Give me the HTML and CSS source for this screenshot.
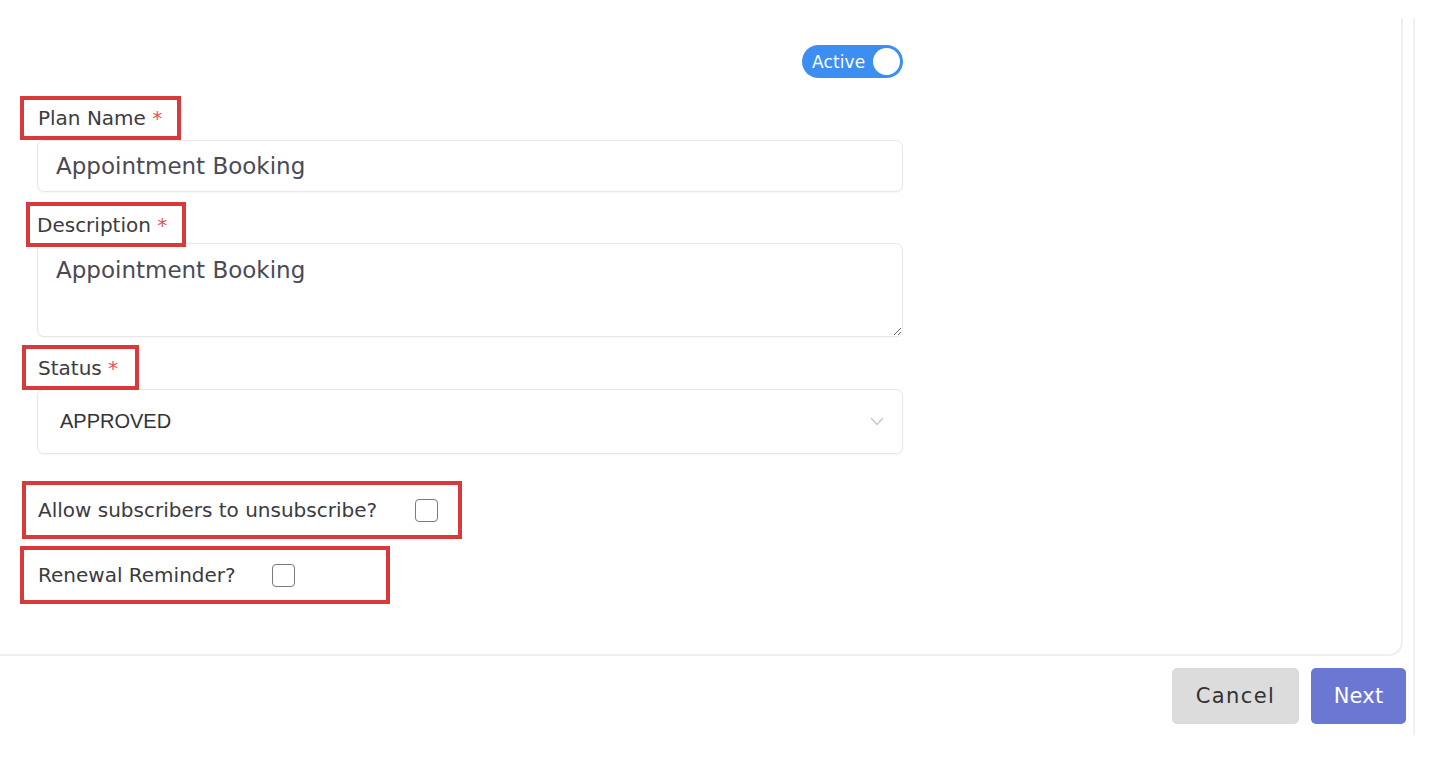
FILE: index.html
```html
<!DOCTYPE html>
<html lang="en">
<head>
<meta charset="utf-8">
<title>Plan</title>
<link rel="stylesheet" href="styles.css">
</head>
<body>
<div class="frame">
  <div class="card">
    <form class="form">
      <div class="toggle-row">
        <div class="toggle">
          <span class="toggle-text">Active</span>
          <span class="toggle-knob"></span>
        </div>
      </div>

      <label class="field-label label-plan">Plan Name <span class="req">*</span></label>
      <div class="input">Appointment Booking</div>

      <label class="field-label label-desc">Description <span class="req">*</span></label>
      <textarea class="textarea">Appointment Booking</textarea>

      <label class="field-label label-status">Status <span class="req">*</span></label>
      <div class="select">
        <span class="select-value">APPROVED</span>
        <svg class="chevron" width="14" height="9" viewBox="0 0 14 9"><path d="M1 1 L7 7.5 L13 1" fill="none" stroke="#c4c4c8" stroke-width="1.2"/></svg>
      </div>

      <div class="check-box check-unsub">
        <span class="check-text">Allow subscribers to unsubscribe?</span>
        <input type="checkbox" class="check">
      </div>
      <div class="check-box check-renew">
        <span class="check-text">Renewal Reminder?</span>
        <input type="checkbox" class="check">
      </div>
    </form>
  </div>
  <div class="footer">
    <button class="btn btn-cancel" type="button">Cancel</button>
    <button class="btn btn-next" type="button">Next</button>
  </div>
</div>
</body>
</html>
```

FILE: styles.css
```css
* { box-sizing: border-box; }
html, body { margin: 0; padding: 0; background: #fff; }
body {
  font-family: "DejaVu Sans", "Noto Sans", sans-serif;
  color: #3a3a3e;
  width: 1434px;
  height: 758px;
  overflow: hidden;
}
.frame {
  margin-top: 18px;
  width: 1415px;
  height: 717px;
  border-right: 2px solid #f1f1f4;
}
.card {
  width: 1403px;
  height: 638px;
  border-right: 2px solid #efeff2;
  border-bottom: 2px solid #efeff2;
  border-bottom-right-radius: 14px;
  padding: 27px 0 0 37px;
}
.form {
  width: 866px;
  display: flex;
  flex-direction: column;
  align-items: flex-start;
}
.toggle-row {
  align-self: stretch;
  display: flex;
  justify-content: flex-end;
}
.toggle {
  width: 101px;
  height: 33px;
  border-radius: 17px;
  background: #3c8ef0;
  display: flex;
  align-items: center;
  justify-content: space-between;
  padding: 0 3px 0 10px;
}
.toggle-text {
  color: #fff;
  font-size: 17px;
  letter-spacing: 0.1px;
}
.toggle-knob {
  width: 27px;
  height: 27px;
  border-radius: 50%;
  background: #fff;
}
.field-label {
  display: inline-block;
  border: 4px solid #d83a3c;
  font-size: 20px;
  line-height: 24px;
  color: #3b3b40;
  position: relative;
  z-index: 1;
}
.req { color: #e2505c; }
.label-plan {
  margin-top: 18px;
  margin-left: -17px;
  padding: 6px 15px 6px 14px;
}
.label-desc {
  margin-top: 10px;
  margin-left: -11px;
  margin-bottom: -4px;
  padding: 7px 15px 6px 7px;
}
.label-status {
  margin-top: 8px;
  margin-left: -15px;
  padding: 7px 17px 6px 12px;
  margin-bottom: -1px;
}
.input {
  width: 866px;
  height: 52px;
  border: 1px solid #e7e7eb;
  border-radius: 7px;
  padding: 0 18px;
  display: flex;
  align-items: center;
  font-size: 23px;
  color: #4a4a55;
  box-shadow: 0 1px 2px rgba(0,0,0,0.04);
}
.textarea {
  width: 866px;
  height: 94px;
  border: 1px solid #e7e7eb;
  border-radius: 7px;
  padding: 12px 18px;
  font-family: "DejaVu Sans", "Noto Sans", sans-serif;
  font-size: 23px;
  line-height: 28px;
  color: #4a4a55;
  resize: vertical;
  outline: none;
  box-shadow: 0 1px 2px rgba(0,0,0,0.04);
}
.select {
  width: 866px;
  height: 65px;
  border: 1px solid #e7e7eb;
  border-radius: 7px;
  padding: 0 18px 0 22px;
  display: flex;
  align-items: center;
  justify-content: space-between;
  box-shadow: 0 1px 2px rgba(0,0,0,0.05);
}
.select-value {
  font-family: "Liberation Sans", Arial, sans-serif;
  font-size: 20px;
  color: #333338;
}
.check-box {
  display: flex;
  align-items: center;
  border: 4px solid #d83a3c;
  height: 58px;
  font-size: 20px;
  color: #3b3b40;
}
.check-unsub {
  margin-top: 27px;
  margin-left: -15px;
  width: 440px;
  padding-left: 12px;
  gap: 38px;
}
.check-renew {
  margin-top: 7px;
  margin-left: -17px;
  width: 370px;
  padding-left: 14px;
  gap: 36px;
}
.check {
  appearance: none;
  -webkit-appearance: none;
  margin: 0;
  width: 23px;
  height: 23px;
  border: 1.5px solid #7a7a80;
  border-radius: 4px;
  background: #fff;
}
.footer {
  display: flex;
  justify-content: flex-end;
  gap: 12px;
  padding-top: 12px;
  padding-right: 7px;
}
.btn {
  height: 56px;
  border: none;
  border-radius: 5px;
  font-family: "DejaVu Sans", "Noto Sans", sans-serif;
  font-size: 21px;
}
.btn-cancel {
  width: 127px;
  background: #dcdcdc;
  color: #333;
  letter-spacing: 1.4px;
}
.btn-next {
  width: 95px;
  background: #6b78d3;
  color: #fff;
  letter-spacing: 0.2px;
}
```
